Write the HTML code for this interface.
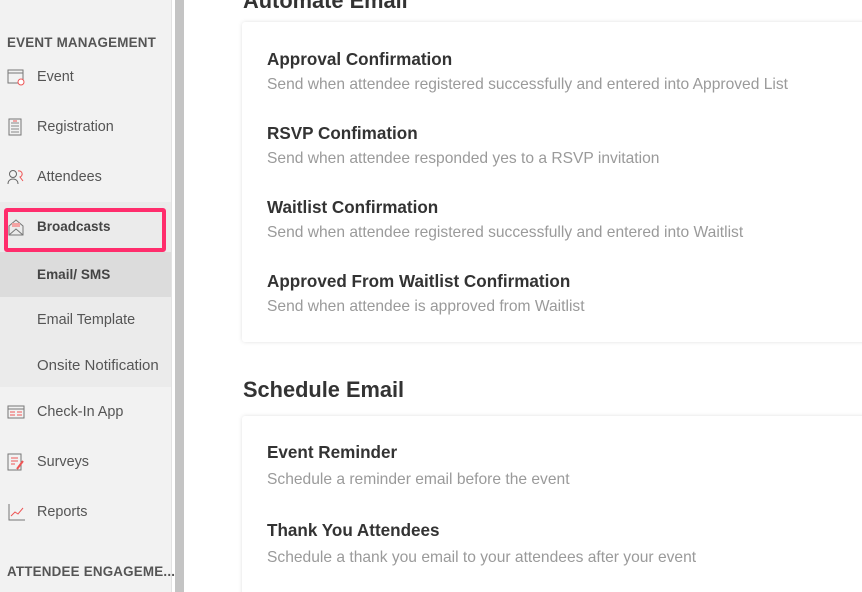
<!DOCTYPE html>
<html><head><meta charset="utf-8"><style>
*{margin:0;padding:0;box-sizing:border-box}
html,body{width:862px;height:592px;overflow:hidden}
body{background:#fff;font-family:"Liberation Sans",sans-serif;position:relative}
.sb{position:absolute;left:0;top:0;width:172px;height:592px;background:#f2f2f2;border-right:1px solid #e2e2e2}
.bar{position:absolute;left:175px;top:0;width:9px;height:592px;background:#c4c4c4}
.sec{position:absolute;left:7px;font-size:13.4px;font-weight:bold;color:#555;letter-spacing:0.2px}
.it{position:absolute;left:37px;font-size:14.4px;color:#555}
.ic{position:absolute;left:7px;width:18px;height:18px}
.grp{position:absolute;left:0;top:202px;width:171px;height:185px;background:#ebebeb}
.act{position:absolute;left:0;top:252px;width:171px;height:45px;background:#dcdcdc}
.hl{position:absolute;left:4px;top:208px;width:162px;height:44px;border:4px solid #ff2d6c;border-radius:3px}
.card{position:absolute;left:242px;width:640px;background:#fff;box-shadow:0 0 4px rgba(0,0,0,0.12);border-radius:3px}
.t{position:absolute;left:267px;font-size:17.1px;font-weight:bold;color:#333}
.s{position:absolute;left:267px;font-size:15.6px;color:#9a9a9a}
.h{position:absolute;left:243px;font-size:21.8px;font-weight:bold;color:#333}
</style></head><body>
<div class="sb"></div>
<div class="grp"></div><div class="act"></div>
<div class="bar"></div>
<div class="sec" style="top:35px">EVENT MANAGEMENT</div>
<svg class="ic" style="top:68px" viewBox="0 0 18 18"><rect x="1" y="2" width="15" height="13" fill="none" stroke="#777"/><line x1="1" y1="5" x2="16" y2="5" stroke="#777"/><circle cx="14" cy="14" r="3" fill="#fff" stroke="#e55"/></svg>
<div class="it" style="top:69px">Event</div>
<svg class="ic" style="top:118px" viewBox="0 0 18 18"><rect x="2" y="1" width="12" height="16" fill="none" stroke="#777"/><path d="M4 5h8M4 8h8M4 11h8M4 14h8" stroke="#888"/><line x1="6" y1="3" x2="10" y2="3" stroke="#e55"/></svg>
<div class="it" style="top:119px">Registration</div>
<svg class="ic" style="top:168px" viewBox="0 0 18 18"><circle cx="6" cy="6" r="3.5" fill="none" stroke="#666"/><path d="M1 16c0-4 3-5 5-5s5 1 5 5" fill="none" stroke="#666"/><path d="M11 3a3 3 0 1 1 2 6l3 4" fill="none" stroke="#e55"/></svg>
<div class="it" style="top:169px">Attendees</div>
<svg class="ic" style="top:218px" viewBox="0 0 18 18"><path d="M2 8l7-6 7 6v9H2z" fill="none" stroke="#777"/><path d="M2 17l7-6 7 6" fill="none" stroke="#777"/><rect x="5" y="5" width="8" height="4" fill="#f4a3a3"/></svg>
<div class="it" style="top:219px;font-weight:bold;color:#444;font-size:13.5px">Broadcasts</div>
<div class="hl"></div>
<div class="it" style="top:267px;font-weight:bold;color:#444;font-size:13.6px">Email/ SMS</div>
<div class="it" style="top:312px">Email Template</div>
<div class="it" style="top:357px;font-size:15px">Onsite Notification</div>
<svg class="ic" style="top:403px" viewBox="0 0 18 18"><rect x="1" y="3" width="16" height="12" fill="none" stroke="#777"/><line x1="1" y1="6" x2="17" y2="6" stroke="#777"/><path d="M3 9h5M3 12h5M10 9h5M10 12h5" stroke="#e55"/></svg>
<div class="it" style="top:404px">Check-In App</div>
<svg class="ic" style="top:453px" viewBox="0 0 18 18"><rect x="1" y="1" width="13" height="16" fill="none" stroke="#777"/><path d="M4 5h7M4 8h7M4 11h4" stroke="#e55"/><path d="M16 8l-6 8" stroke="#e55" stroke-width="2"/></svg>
<div class="it" style="top:454px">Surveys</div>
<svg class="ic" style="top:503px" viewBox="0 0 18 18"><path d="M2 1v16h16" fill="none" stroke="#777"/><path d="M4 13l4-4 3 2 5-6" fill="none" stroke="#e55"/></svg>
<div class="it" style="top:504px">Reports</div>
<div class="sec" style="top:564px">ATTENDEE ENGAGEME...</div>

<div class="h" style="top:-12px">Automate Email</div>
<div class="card" style="top:22px;height:320px"></div>
<div class="t" style="top:50px">Approval Confirmation</div>
<div class="s" style="top:76px">Send when attendee registered successfully and entered into Approved List</div>
<div class="t" style="top:124px">RSVP Confimation</div>
<div class="s" style="top:150px">Send when attendee responded yes to a RSVP invitation</div>
<div class="t" style="top:198px">Waitlist Confirmation</div>
<div class="s" style="top:224px">Send when attendee registered successfully and entered into Waitlist</div>
<div class="t" style="top:272px">Approved From Waitlist Confirmation</div>
<div class="s" style="top:298px">Send when attendee is approved from Waitlist</div>

<div class="h" style="top:377px">Schedule Email</div>
<div class="card" style="top:416px;height:200px"></div>
<div class="t" style="top:443px">Event Reminder</div>
<div class="s" style="top:471px">Schedule a reminder email before the event</div>
<div class="t" style="top:521px">Thank You Attendees</div>
<div class="s" style="top:549px">Schedule a thank you email to your attendees after your event</div>
</body></html>
